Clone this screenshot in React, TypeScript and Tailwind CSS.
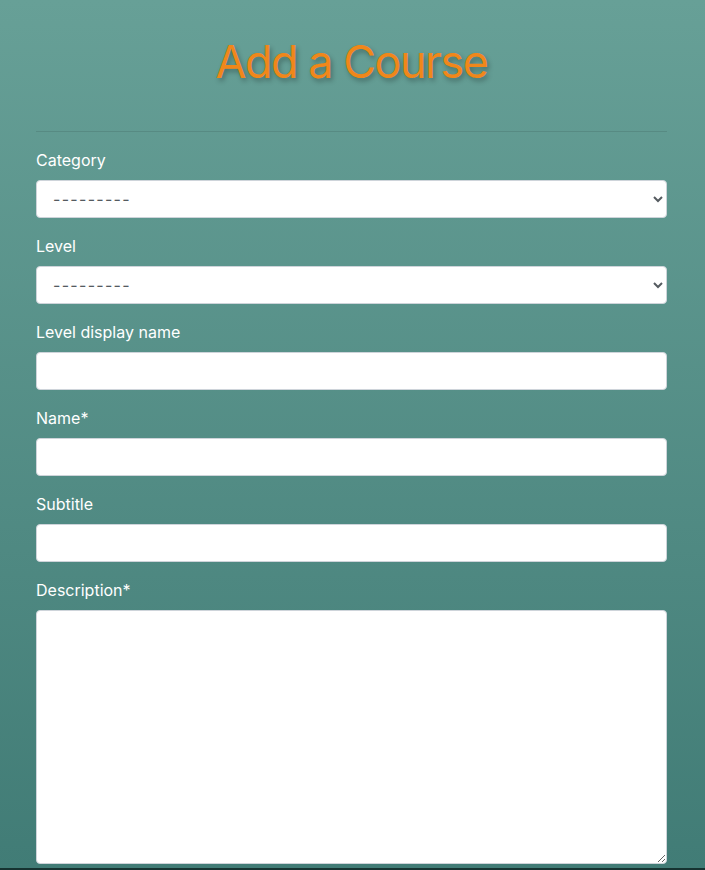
const fields = [
  { label: "Category", kind: "select" },
  { label: "Level", kind: "select" },
  { label: "Level display name", kind: "input" },
  { label: "Name*", kind: "input" },
  { label: "Subtitle", kind: "input" },
];

export default function App() {
  return (
    <div className="min-h-[870px] flex flex-col font-['Inter',sans-serif]">
      <div className="h-[868px] overflow-hidden bg-gradient-to-b from-[#67a097] to-[#417c76] pl-9 pr-[38px]">
        <h1 className="pt-[34px] pb-[27px] text-center text-[45px] leading-[56px] tracking-[-1.5px] text-[#f0871a] [text-shadow:2px_3px_5px_rgba(0,0,0,0.3)]">
          Add a Course
        </h1>
        <hr className="border-t border-black/10 mt-[14px] mb-4" />
        <form>
          {fields.map((f) => (
            <div key={f.label} className="mb-4">
              <label className="block mb-2 text-base leading-6 text-white">{f.label}</label>
              {f.kind === "select" ? (
                <select className="block w-full h-[38px] pl-3 pr-2 rounded border border-[#ced4da] bg-white text-base tracking-[1.3px] text-[#555b60]">
                  <option>---------</option>
                </select>
              ) : (
                <input type="text" className="block w-full h-[38px] px-3 rounded border border-[#ced4da] bg-white text-base" />
              )}
            </div>
          ))}
          <div>
            <label className="block mb-2 text-base leading-6 text-white">Description*</label>
            <textarea className="block w-full h-[254px] px-3 py-1.5 rounded border border-[#ced4da] bg-white text-base" />
          </div>
        </form>
      </div>
      <div className="flex-1 bg-[#163331]" />
    </div>
  );
}
